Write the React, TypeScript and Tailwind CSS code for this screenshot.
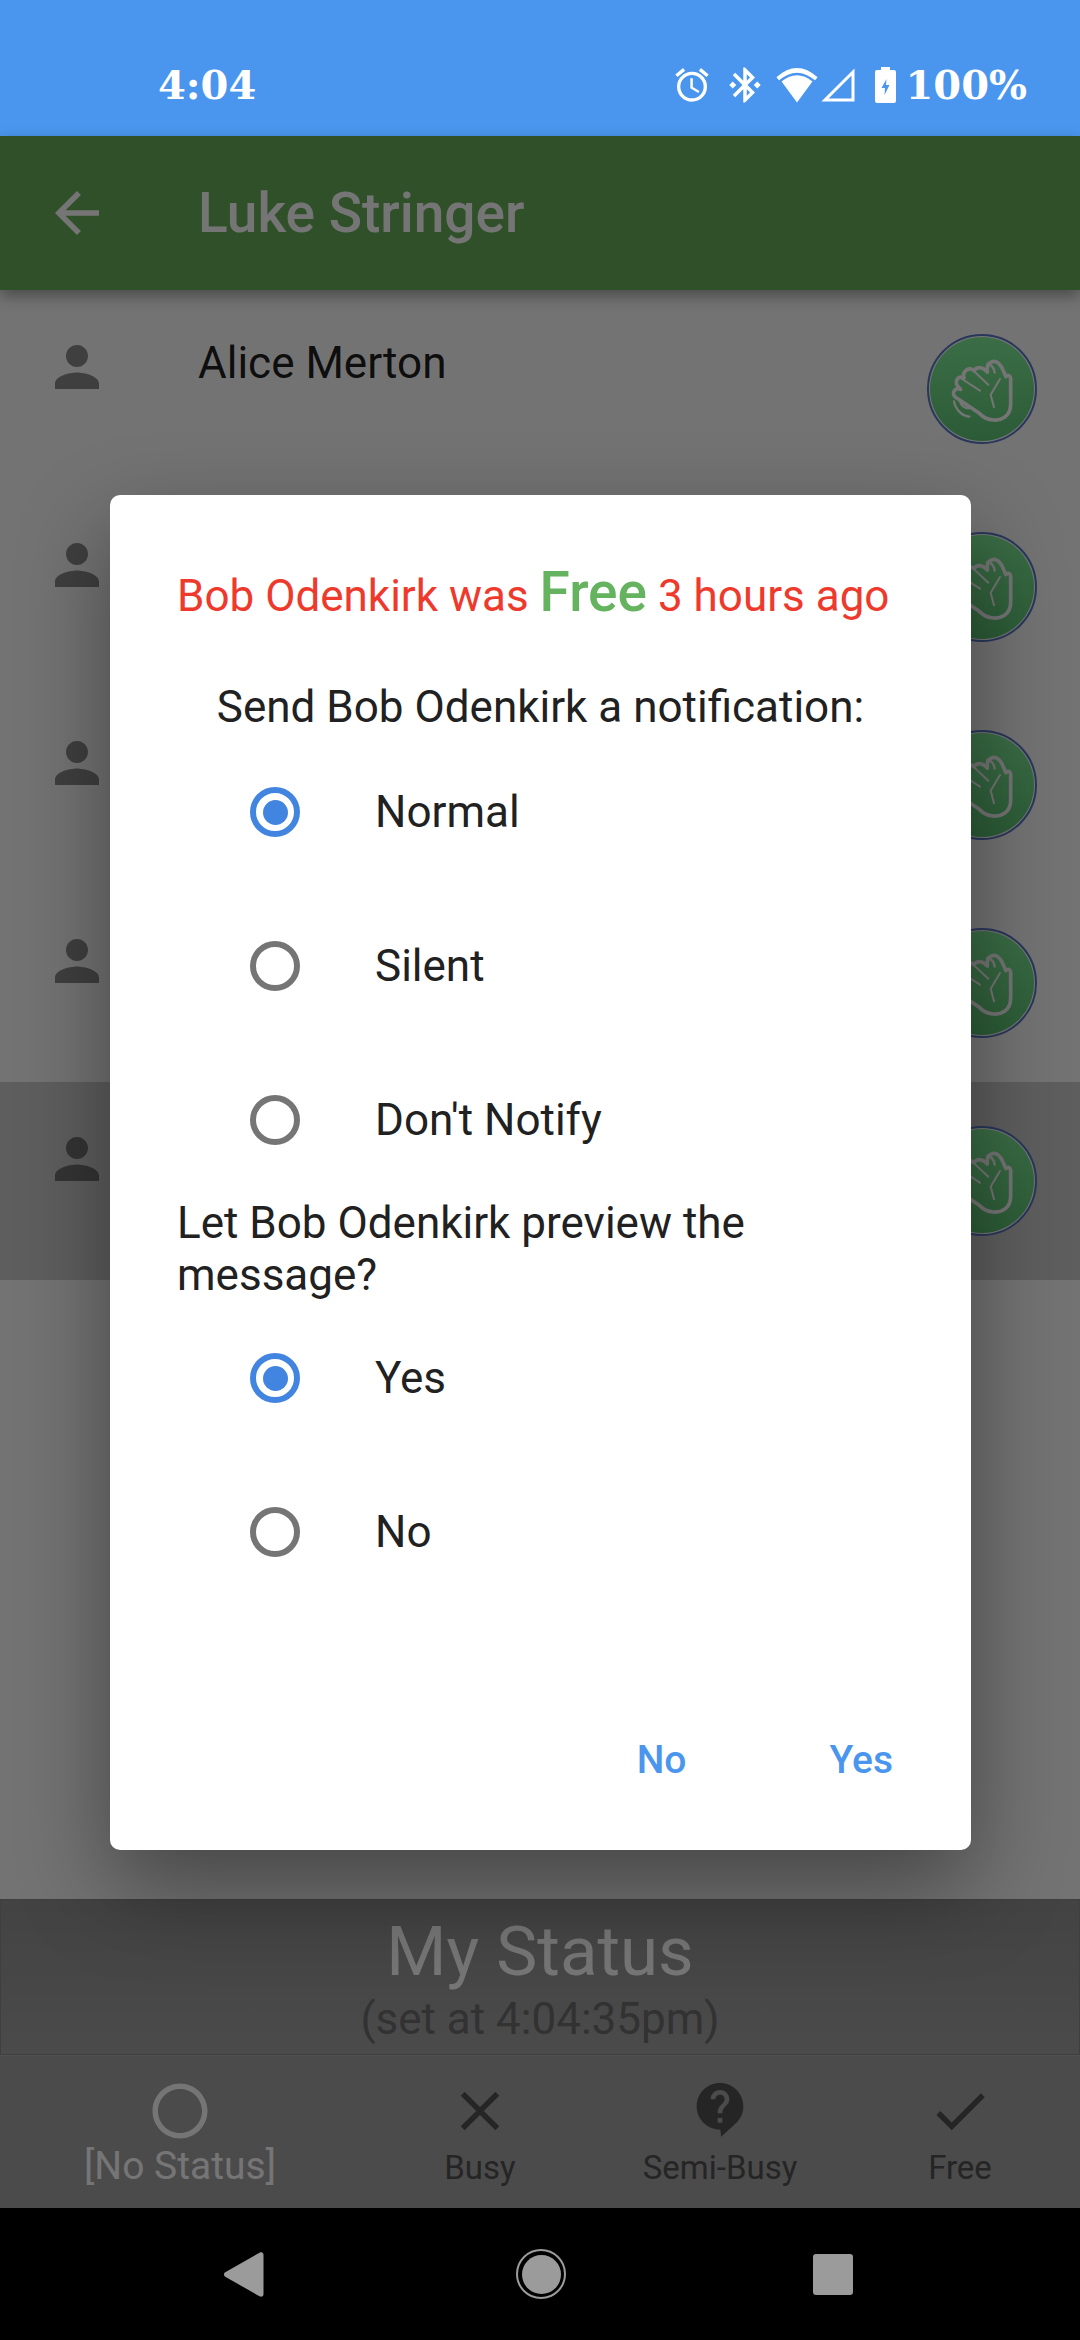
import React from "react";
import {
  MdArrowBack,
  MdPerson,
  MdAccessAlarm,
  MdBluetoothConnected,
  MdClose,
  MdCheck,
  MdRadioButtonUnchecked,
} from "react-icons/md";

const roboto = "font-['Roboto',sans-serif]";

function Radio({ on }: { on?: boolean }) {
  return (
    <span
      className={`flex h-[50px] w-[50px] items-center justify-center rounded-full border-[6px] ${
        on ? "border-[#4285e0]" : "border-[#757575]"
      }`}
    >
      {on && <span className="h-[25px] w-[25px] rounded-full bg-[#4285e0]" />}
    </span>
  );
}

function RadioRow({ label, on }: { label: string; on?: boolean }) {
  return (
    <div className="flex h-[154px] items-center pl-[140px]">
      <Radio on={on} />
      <span className="ml-[75px] text-[44px] text-[#212121]">{label}</span>
    </div>
  );
}

function WaveIcon() {
  return (
    <svg width="65" height="70" viewBox="150 130 195 210" fill="none" stroke="white" strokeWidth="11" strokeLinecap="round" strokeLinejoin="round">
      <path d="M238 308L170 262C152 252 162 228 182 236L178 232C160 215 172 192 192 202C185 180 208 168 222 180C232 165 250 170 262 184C258 155 285 138 305 170L318 198C325 190 332 195 332 205V280C332 320 300 330 280 328C262 327 250 320 238 308Z" />
      <path strokeWidth="6" d="M186 205L240 240M222 182L265 222M300 205L272 252L282 290" />
      <path strokeWidth="7" d="M262 160C275 162 282 172 284 186M162 272C166 295 185 316 208 318M180 272C184 284 194 292 205 293" />
    </svg>
  );
}

function Row({ name, selected }: { name?: string; selected?: boolean }) {
  return (
    <div className={`flex h-[198px] items-center pl-[44px] pr-[43px] ${selected ? "bg-[#cecece]" : ""}`}>
      <MdPerson className="mb-[44px] text-[66px] text-black/45" />
      <span className="mb-[52px] ml-[88px] text-[44px] leading-[66px] text-black/90">{name}</span>
      <span className="ml-auto flex h-[110px] w-[110px] items-center justify-center rounded-full border-[2px] border-[#5a78c8] bg-white p-[1px]">
        <span className="flex h-full w-full items-center justify-center rounded-full bg-gradient-to-b from-[#80ee98] to-[#60c878]">
          <WaveIcon />
        </span>
      </span>
    </div>
  );
}

function NavItem({ label, icon, wide, selected }: { label: string; icon: React.ReactNode; wide?: boolean; selected?: boolean }) {
  return (
    <div className={`flex flex-col items-center ${wide ? "w-[360px]" : "w-[240px]"} ${selected ? "text-white" : "text-[#525252]"}`}>
      <div className="flex h-[66px] items-center justify-center">{icon}</div>
      <span className={`${selected ? "text-[39px] leading-[44px]" : "mt-[4px] text-[33px] leading-[40px]"} whitespace-nowrap`}>{label}</span>
    </div>
  );
}

export default function App() {
  return (
    <div className={`flex h-[2340px] w-[1080px] flex-col overflow-hidden bg-black ${roboto}`}>
      {/* Status bar */}
      <div className="flex h-[136px] shrink-0 items-center bg-[#4a96ee] pl-[158px] pr-[53px] pt-[34px] text-white">
        <span className="font-['DejaVu_Serif',serif] text-[40px] font-bold">4:04</span>
        <MdAccessAlarm className="ml-auto text-[40px]" />
        <MdBluetoothConnected className="ml-[12px] text-[42px]" />
        <svg className="ml-[10px]" width="42" height="35" viewBox="0 0 40 34" fill="white">
          <path d="M0 9Q20-9 40 9L37.5 12Q20-3 2.5 12Z" />
          <path d="M5 13Q20 1 35 13L20 33.5Z" />
        </svg>
        <svg className="ml-[3px]" width="34" height="34" viewBox="0 0 34 34" fill="none" stroke="white" strokeWidth="3">
          <path d="M32 4V32H4Z" />
        </svg>
        <svg className="ml-[20px]" width="21" height="36" viewBox="0 0 21 36" fill="white">
          <path
            fillRule="evenodd"
            d="M6 0h9v3h4a2 2 0 012 2v29a2 2 0 01-2 2H2a2 2 0 01-2-2V5a2 2 0 012-2h4zM11.5 12L6.5 21H10L9.5 28L14.5 18H11Z"
          />
        </svg>
        <span className="ml-[9px] font-['DejaVu_Serif',serif] text-[40px] font-bold leading-none">100%</span>
      </div>

      {/* App, dimmed */}
      <div className="relative flex min-h-0 flex-1 flex-col bg-[#fafafa]">
        <div className="z-10 flex h-[154px] shrink-0 items-center bg-[#66ae59] pl-[44px] text-white shadow-[0_6px_14px_rgba(0,0,0,0.35)]">
          <MdArrowBack className="text-[66px]" />
          <span className="ml-[88px] text-[55px] font-medium">Luke Stringer</span>
        </div>
        <div className="flex-1">
          <Row name="Alice Merton" />
          <Row />
          <Row />
          <Row />
          <Row selected />
        </div>
        <div className="flex h-[156px] shrink-0 flex-col items-center border border-[#8a8a8a] bg-gradient-to-b from-[#929292] to-[#a3a3a3] pt-[10px]">
          <span className="text-[69px] leading-[84px] text-white">My Status</span>
          <span className="text-[44px] leading-[50px] text-[#6d6d6d]">(set at 4:04:35pm)</span>
        </div>
        <div className="flex h-[153px] shrink-0 border-t border-[#b0b0b0] bg-[#a3a3a3] pt-[22px]">
          <NavItem wide selected label="[No Status]" icon={<MdRadioButtonUnchecked className="text-[66px]" />} />
          <NavItem label="Busy" icon={<MdClose className="text-[66px]" />} />
          <NavItem
            label="Semi-Busy"
            icon={
              <svg width="56" height="66" viewBox="0 0 24 28" fill="currentColor">
                <path d="M12 2C6.48 2 2 6.48 2 12s4.48 10 10 10 10-4.48 10-10S17.52 2 12 2zm1 17h-2v-2h2v2zm2.07-7.75l-.9.92C13.45 12.9 13 13.5 13 15h-2v-.5c0-1.1.45-2.1 1.17-2.83l1.24-1.26c.37-.36.59-.86.59-1.41 0-1.1-.9-2-2-2s-2 .9-2 2H8c0-2.21 1.79-4 4-4s4 1.79 4 4c0 .88-.36 1.68-.93 2.25z" />
                <path d="M12 21L18 20L12.5 25Z" />
              </svg>
            }
          />
          <NavItem label="Free" icon={<MdCheck className="text-[66px]" />} />
        </div>

        {/* Barrier */}
        <div className="absolute inset-0 z-20 bg-black/54" />

        {/* Dialog */}
        <div className="absolute left-[110px] top-[359px] z-30 flex h-[1355px] w-[861px] flex-col rounded-[10px] bg-white pt-[62px] shadow-[0_36px_90px_rgba(0,0,0,0.4)]">
          <div className="whitespace-nowrap pl-[67px] text-[44px] leading-[70px] text-[#ee3a2c]">
            Bob Odenkirk was <span className="text-[55px] font-medium text-[#66b35f]">Free</span> 3 hours ago
          </div>
          <div className="mt-[50px] text-center text-[44px] leading-[52px] text-[#212121]">Send Bob Odenkirk a notification:</div>
          <div className="mt-[2px]">
            <RadioRow label="Normal" on />
            <RadioRow label="Silent" />
            <RadioRow label="Don't Notify" />
          </div>
          <div className="px-[67px] text-[44px] leading-[52px] text-[#212121]">
            Let Bob Odenkirk preview the message?
          </div>
          <RadioRow label="Yes" on />
          <RadioRow label="No" />
          <div className="mt-auto flex justify-end gap-[143px] pb-[62px] pr-[78px] text-[39px] font-medium leading-[56px] text-[#4a96ee]">
            <span>No</span>
            <span>Yes</span>
          </div>
        </div>
      </div>

      {/* Navigation bar */}
      <div className="flex h-[132px] shrink-0 items-center bg-black pl-[224px]">
        <svg width="40" height="45" viewBox="0 0 40 45" fill="#9b9b9b">
          <path d="M0.8 20.6L35.5 0.7C37.5-0.4 39.5 0.6 39.5 3V42C39.5 44.4 37.5 45.4 35.5 44.3L0.8 24.4C-0.3 23.4-0.3 21.6 0.8 20.6Z" />
        </svg>
        <span className="ml-[252px] flex h-[50px] w-[50px] items-center justify-center rounded-full border-[2px] border-[#9b9b9b]">
          <span className="h-[39px] w-[39px] rounded-full bg-[#9b9b9b]" />
        </span>
        <span className="ml-[247px] h-[41px] w-[40px] rounded-[3px] bg-[#9b9b9b]" />
      </div>
    </div>
  );
}
